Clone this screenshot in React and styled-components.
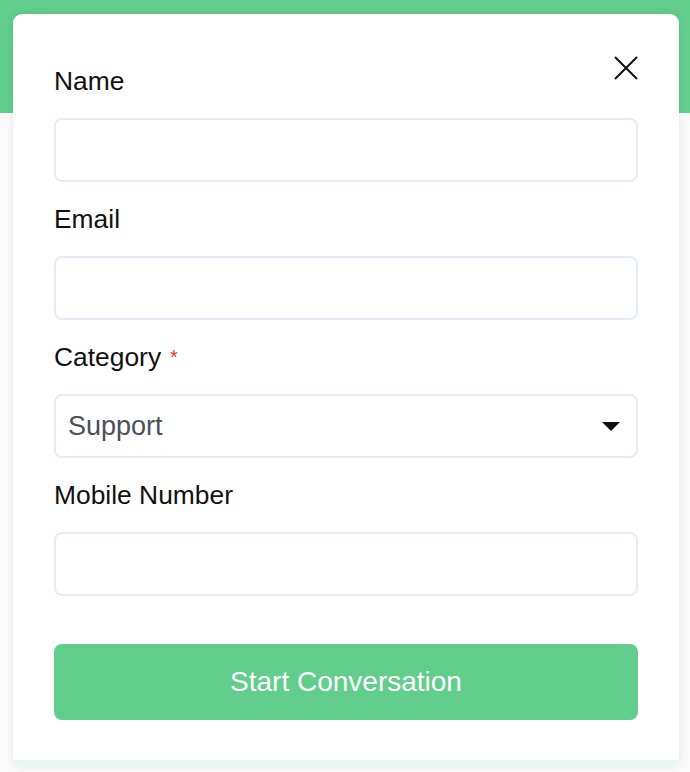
import React from "react";
import styled, { createGlobalStyle } from "styled-components";

const GlobalStyle = createGlobalStyle`
  body {
    margin: 0;
    font-family: "Liberation Sans", Arial, sans-serif;
    background: #fafafa;
  }
`;

const Page = styled.div`
  min-height: 772px;
  padding-top: 14px;
  box-sizing: border-box;
  background: linear-gradient(#61ce8b 0, #61ce8b 113px, #fafafa 113px);
`;

const Card = styled.div`
  position: relative;
  width: 666px;
  margin-left: 13px;
  background: #fff;
  border-radius: 9px;
  box-shadow: 0 0 8px rgba(0, 0, 0, 0.08);
  overflow: hidden;
`;

const Form = styled.form`
  display: flex;
  flex-direction: column;
  padding: 53px 41px 40px;
`;

const Field = styled.div`
  display: flex;
  flex-direction: column;
  gap: 23px;
  margin-bottom: 23px;
`;

const Label = styled.label`
  font-size: 26.4px;
  line-height: 28px;
  color: #111;

  span {
    color: #e8392f;
    font-size: 20px;
    vertical-align: top;
    margin-left: 9px;
  }
`;

const Input = styled.input`
  box-sizing: border-box;
  width: 100%;
  height: 64px;
  border: 2px solid #e4ecfa;
  border-radius: 8px;
  padding: 0 13px;
  font: inherit;
  font-size: 27px;
  outline: none;
`;

const SelectBox = styled.div`
  box-sizing: border-box;
  display: flex;
  align-items: center;
  justify-content: space-between;
  height: 64px;
  border: 2px solid #e4ecfa;
  border-radius: 8px;
  padding: 0 16px 0 12px;
  font-size: 27px;
  color: #4b505a;
`;

const Button = styled.button`
  margin-top: 25px;
  height: 76px;
  border: 0;
  border-radius: 8px;
  background: #61ce8b;
  color: #fff;
  font-family: "Liberation Sans", Arial, sans-serif;
  font-size: 28px;
  cursor: pointer;
`;

const Close = styled.button`
  position: absolute;
  top: 42px;
  right: 41px;
  width: 24px;
  height: 24px;
  padding: 0;
  border: 0;
  background: none;
  cursor: pointer;

  svg {
    display: block;
  }
`;

const Footer = styled.div`
  height: 7px;
  background: #e6f7ed;
`;

const fields = [
  { label: "Name" },
  { label: "Email" },
  { label: "Category", required: true, select: "Support" },
  { label: "Mobile Number" },
];

const App = () => {
  return (
    <Page>
      <GlobalStyle />
      <Card>
        <Close aria-label="Close">
          <svg width="24" height="24" viewBox="0 0 24 24">
            <path d="M1 1L23 23M23 1L1 23" stroke="#111" strokeWidth="2" />
          </svg>
        </Close>
        <Form onSubmit={(e) => e.preventDefault()}>
          {fields.map((f) => (
            <Field key={f.label}>
              <Label>
                {f.label}
                {f.required && <span>*</span>}
              </Label>
              {f.select ? (
                <SelectBox>
                  {f.select}
                  <svg width="18" height="9" viewBox="0 0 18 9">
                    <path d="M0 0H18L9 9Z" fill="#111" />
                  </svg>
                </SelectBox>
              ) : (
                <Input type="text" />
              )}
            </Field>
          ))}
          <Button type="submit">Start Conversation</Button>
        </Form>
        <Footer />
      </Card>
    </Page>
  );
};

export default App;
